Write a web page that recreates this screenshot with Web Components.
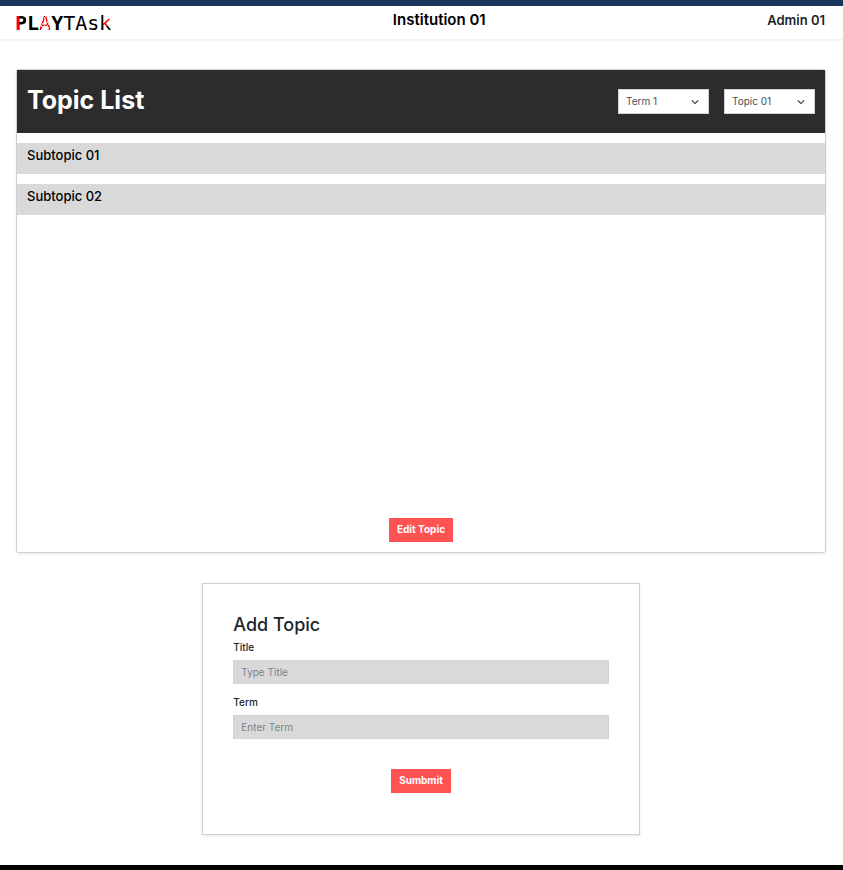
<!DOCTYPE html>
<html lang="en">
<head>
<meta charset="utf-8">
<meta name="viewport" content="width=device-width, initial-scale=1">
<title>PLAYTAsk</title>
<style>
  html { height: 100%; }
  body { margin: 0; min-height: 100%; display: flex; flex-direction: column; background: #fff; color: #212529; font: 400 10px/15px Inter, "Liberation Sans", sans-serif; }
  play-page { flex: 1; }
</style>
</head>
<body>
<play-page>
  <play-header slot="header">
    <play-logo slot="brand"></play-logo>
    <span slot="title">Institution 01</span>
    <span slot="user">Admin 01</span>
  </play-header>
  <topic-panel>
    <span slot="heading">Topic List</span>
    <play-select slot="filters" label="Term" value="Term 1"></play-select>
    <play-select slot="filters" label="Topic" value="Topic 01"></play-select>
    <topic-row>Subtopic 01</topic-row>
    <topic-row>Subtopic 02</topic-row>
    <play-button slot="action">Edit Topic</play-button>
  </topic-panel>
  <topic-form>
    <span slot="heading">Add Topic</span>
    <play-field label="Title" hint="Type Title"></play-field>
    <play-field label="Term" hint="Enter Term"></play-field>
    <play-button slot="action">Sumbmit</play-button>
  </topic-form>
</play-page>
<script>
const define = (name, html, setup) => {
  const template = document.createElement('template');
  template.innerHTML = html;
  customElements.define(name, class extends HTMLElement {
    constructor() {
      super();
      this.attachShadow({ mode: 'open' }).append(template.content.cloneNode(true));
    }
    connectedCallback() {
      if (setup) setup(this, this.shadowRoot);
    }
  });
};

define('play-page', `
  <style>
    :host { display: flex; flex-direction: column; border-top: 6px solid #1b365d; border-bottom: 5px solid #000; box-sizing: border-box; }
    main { flex: 1; display: flex; flex-direction: column; gap: 30px; padding: 29px 17px 30px 16px; }
  </style>
  <slot name="header"></slot>
  <main><slot></slot></main>`);

define('play-header', `
  <style>
    :host { display: block; }
    header { display: flex; justify-content: space-between; align-items: flex-start; height: 33px; padding: 0 18px 0 15px; border-bottom: 1px solid #f0f0f0; box-shadow: 0 1px 1px #f8f8f8; }
    .title { font-size: 15px; line-height: 28px; font-weight: 600; color: #000; }
    .user { font-size: 13px; line-height: 29px; font-weight: 600; }
  </style>
  <header>
    <slot name="brand"></slot>
    <div class="title"><slot name="title"></slot></div>
    <div class="user"><slot name="user"></slot></div>
  </header>`);

define('play-logo', `
  <style>
    :host { display: block; }
    a { display: block; font: 400 20px/34px "DejaVu Sans Mono", monospace; color: #000; text-decoration: none; white-space: nowrap; }
    .p, .a, .k { color: transparent; -webkit-background-clip: text; background-clip: text; }
    .p, .l, .y { font-weight: 700; }
    .p { background-image: linear-gradient(90deg, #f00 4px, #000 4px); }
    .a { background-image: repeating-conic-gradient(#f00 0 25%, #fbb 0 50%); background-size: 3px 4px; }
    .k { background-image: linear-gradient(90deg, #000 4px, transparent 4px), linear-gradient(#f00 15px, #000 15px); }
  </style>
  <a href="#" aria-label="PLAYTAsk"><span class="p">P</span><span class="l">L</span><span class="a">A</span><span class="y">Y</span>TAs<span class="k">k</span></a>`);

define('topic-panel', `
  <style>
    :host { display: block; }
    section { display: flex; flex-direction: column; min-height: 484px; box-sizing: border-box; border: 1px solid #d0d0d0; border-radius: 3px; box-shadow: 0 1px 3px rgba(0,0,0,.1); }
    .bar { display: flex; justify-content: space-between; align-items: center; height: 63px; padding: 0 10px; background: #2c2c2c; }
    h1 { margin: 0; font-size: 25px; line-height: 32px; font-weight: 700; color: #fff; padding-bottom: 4px; }
    .filters { display: flex; gap: 15px; }
    .rows { flex: 1; display: flex; flex-direction: column; gap: 10px; padding: 10px 0; }
    .action { display: flex; justify-content: center; padding-bottom: 10px; }
  </style>
  <section>
    <div class="bar">
      <h1><slot name="heading"></slot></h1>
      <div class="filters"><slot name="filters"></slot></div>
    </div>
    <div class="rows"><slot></slot></div>
    <div class="action"><slot name="action"></slot></div>
  </section>`);

define('topic-row', `
  <style>
    :host { display: block; padding: 2px 10px 9px; background: #d9d9d9; color: #000; font-size: 13px; line-height: 20px; font-weight: 500; }
  </style>
  <slot></slot>`);

define('play-select', `
  <style>
    :host { display: grid; width: 91px; }
    select, svg { grid-area: 1 / 1; }
    select { appearance: none; width: 100%; height: 25px; margin: 0; padding: 0 7px; border: 1px solid #ced4da; border-radius: 0; background: #fff; color: #495057; font: inherit; }
    svg { justify-self: end; align-self: center; margin-right: 10px; pointer-events: none; }
  </style>
  <select></select>
  <svg width="8" height="8" viewBox="0 0 8 8" fill="none" stroke="#495057" stroke-width="1.3" stroke-linecap="round" stroke-linejoin="round" aria-hidden="true"><path d="M1.2 2.8 4 5.6 6.8 2.8"/></svg>`,
  (host, root) => {
    const select = root.querySelector('select');
    select.setAttribute('aria-label', host.getAttribute('label'));
    select.replaceChildren(new Option(host.getAttribute('value')));
  });

define('play-button', `
  <style>
    :host { display: block; }
    button { display: block; margin: 0; height: 24px; padding: 0 8px 2px; border: 0; background: #ff5252; color: #fff; font: inherit; font-weight: 700; cursor: pointer; }
  </style>
  <button type="button"><slot></slot></button>`);

define('topic-form', `
  <style>
    :host { display: block; width: 54%; align-self: center; }
    form { padding: 30px 30px 41px; border: 1px solid #d0d0d0; box-shadow: 0 1px 3px rgba(0,0,0,.1); }
    h2 { margin: 0 0 4px; font-size: 18px; line-height: 22px; font-weight: 500; }
    .fields { display: flex; flex-direction: column; gap: 11px; }
    .action { display: flex; justify-content: center; padding-top: 30px; }
  </style>
  <form>
    <h2><slot name="heading"></slot></h2>
    <div class="fields"><slot></slot></div>
    <div class="action"><slot name="action"></slot></div>
  </form>`);

define('play-field', `
  <style>
    :host { display: block; }
    label { display: block; margin-bottom: 5px; font-weight: 500; }
    input { display: block; box-sizing: border-box; width: 100%; height: 24px; margin: 0; padding: 0 7px; border: 1px solid #ced4da; border-radius: 0; background: #d9d9d9; color: #212529; font: inherit; }
    input::placeholder { color: #7b8288; opacity: 1; }
  </style>
  <label for="field"></label>
  <input id="field" type="text">`,
  (host, root) => {
    root.querySelector('label').textContent = host.getAttribute('label');
    root.querySelector('input').placeholder = host.getAttribute('hint');
  });
</script>
</body>
</html>
